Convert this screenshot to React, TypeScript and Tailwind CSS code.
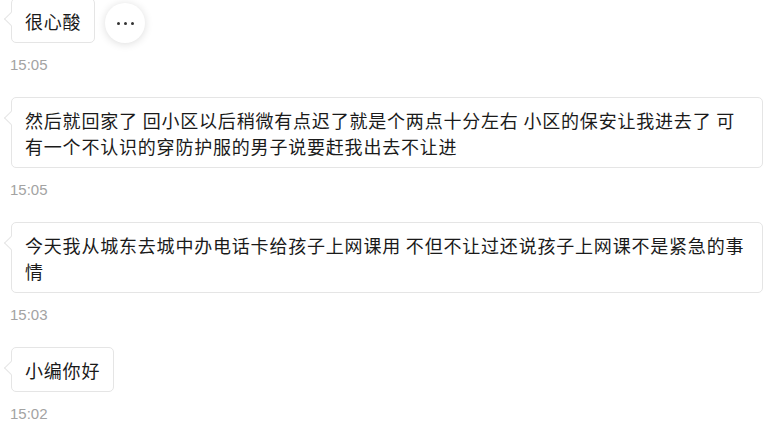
type Message = {
  id: number;
  text: string;
  time: string;
  more?: boolean;
};

const MESSAGES: Message[] = [
  { id: 1, text: '很心酸', time: '15:05', more: true },
  {
    id: 2,
    text: '然后就回家了 回小区以后稍微有点迟了就是个两点十分左右 小区的保安让我进去了 可有一个不认识的穿防护服的男子说要赶我出去不让进',
    time: '15:05',
  },
  {
    id: 3,
    text: '今天我从城东去城中办电话卡给孩子上网课用 不但不让过还说孩子上网课不是紧急的事情',
    time: '15:03',
  },
  { id: 4, text: '小编你好', time: '15:02' },
];

function Bubble({ text }: { text: string }) {
  return (
    <div
      className="relative ml-px rounded-[5px] border border-[#e5e5e5] bg-white pb-[8px] pl-[13px] pr-[13px] pt-[9px] text-[18px] leading-[26px] tracking-[0.8px] text-[#1a1a1a]"
      style={{ fontFamily: "'Noto Sans CJK SC', 'Liberation Sans', sans-serif" }}
    >
      {/* little pointer on the left edge */}
      <span className="absolute left-[-6px] top-[15px] h-[10px] w-[10px] rotate-45 border-b border-l border-[#e5e5e5] bg-white" />
      <p className="relative">{text}</p>
    </div>
  );
}

function MoreButton() {
  return (
    <button className="flex h-[40px] w-[40px] items-center justify-center gap-[4px] rounded-full bg-white shadow-[0_1px_8px_rgba(0,0,0,0.14)]">
      <span className="h-[3px] w-[3px] rounded-full bg-[#333]" />
      <span className="h-[3px] w-[3px] rounded-full bg-[#333]" />
      <span className="h-[3px] w-[3px] rounded-full bg-[#333]" />
    </button>
  );
}

export default function App() {
  return (
    <div
      className="h-[436px] w-[774px] overflow-hidden bg-white pl-[10px] pr-[11px]"
      style={{ fontFamily: "'Liberation Sans', 'Noto Sans CJK SC', sans-serif" }}
    >
      <div className="-mt-[2px] flex flex-col">
        {MESSAGES.map((m) => (
          <div key={m.id} className="mb-[22px] flex flex-col items-start">
            <div className="flex items-end gap-[10px]">
              <Bubble text={m.text} />
              {m.more && <MoreButton />}
            </div>
            <span className="mt-[12px] text-[15px] leading-[20px] text-[#a3a3a3]">{m.time}</span>
          </div>
        ))}
      </div>
    </div>
  );
}
